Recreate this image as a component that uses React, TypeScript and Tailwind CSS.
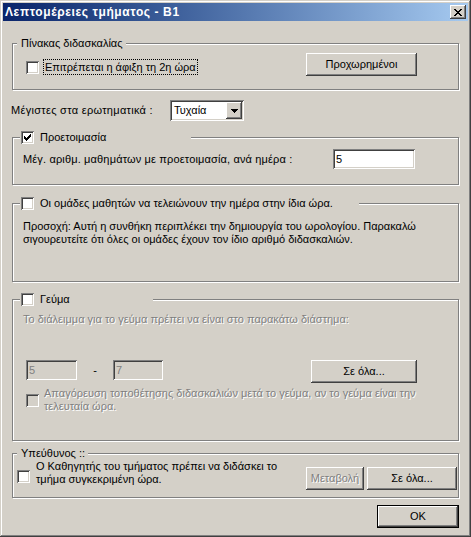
import type { ReactNode } from 'react';

const raised =
  'bg-[#d4d0c8] shadow-[inset_-1px_-1px_0_#404040,inset_1px_1px_0_#fff,inset_-2px_-2px_0_#808080,inset_2px_2px_0_#d4d0c8]';
const sunken =
  'shadow-[inset_1px_1px_0_#808080,inset_-1px_-1px_0_#fff,inset_2px_2px_0_#404040,inset_-2px_-2px_0_#d4d0c8]';
const grayText = 'text-[#808080] [text-shadow:1px_1px_0_#fff]';

function Checkbox({ checked = false, disabled = false }: { checked?: boolean; disabled?: boolean }) {
  return (
    <div className={`w-[13px] h-[13px] shrink-0 ${sunken} ${disabled ? 'bg-[#d4d0c8]' : 'bg-white'}`}>
      {checked && (
        <svg width="13" height="13" shapeRendering="crispEdges">
          <rect x="3" y="5" width="1" height="3" fill="#000" />
          <rect x="4" y="6" width="1" height="3" fill="#000" />
          <rect x="5" y="7" width="1" height="3" fill="#000" />
          <rect x="6" y="6" width="1" height="3" fill="#000" />
          <rect x="7" y="5" width="1" height="3" fill="#000" />
          <rect x="8" y="4" width="1" height="3" fill="#000" />
          <rect x="9" y="3" width="1" height="3" fill="#000" />
        </svg>
      )}
    </div>
  );
}

function Btn({ className, children, disabled = false }: { className: string; children: ReactNode; disabled?: boolean }) {
  return (
    <div className={`flex items-center justify-center shrink-0 ${raised} ${className} ${disabled ? grayText : ''}`}>
      {children}
    </div>
  );
}

function Edit({ className, value, disabled = false }: { className: string; value: string; disabled?: boolean }) {
  return (
    <div
      className={`flex items-center pl-[3px] shrink-0 ${sunken} ${className} ${
        disabled ? 'bg-[#d4d0c8] text-[#808080]' : 'bg-white'
      }`}
    >
      {value}
    </div>
  );
}

function Group({ className, legend, children }: { className: string; legend: ReactNode; children: ReactNode }) {
  return (
    <div className={`relative border border-[#808080] shadow-[inset_1px_1px_0_#fff,1px_1px_0_#fff] ${className}`}>
      {legend}
      {children}
    </div>
  );
}

function TextLegend({ text }: { text: string }) {
  return (
    <div className="absolute left-[4px] top-[-7px] h-[13px] flex items-center bg-[#d4d0c8] pl-[4px] pr-[3px] whitespace-nowrap">
      {text}
    </div>
  );
}

function CheckLegend({ text, width, checked = false }: { text: string; width: string; checked?: boolean }) {
  return (
    <div className={`absolute left-[7px] top-[-7px] h-[13px] flex items-center bg-[#d4d0c8] pl-[1px] whitespace-nowrap ${width}`}>
      <Checkbox checked={checked} />
      <span className="ml-[6px]">{text}</span>
    </div>
  );
}

export default function App() {
  return (
    <div className="w-[471px] h-[537px] bg-[#d4d0c8] p-[3px] flex flex-col text-[11px] leading-[13px] text-black font-['Liberation_Sans',Arial,sans-serif] shadow-[inset_-1px_-1px_0_#404040,inset_1px_1px_0_#d4d0c8,inset_-2px_-2px_0_#808080,inset_2px_2px_0_#fff]">
      {/* Title bar */}
      <div className="h-[18px] flex items-center justify-between bg-gradient-to-r from-[#0a246a] to-[#a6caf0] pl-[2px] pr-[2px]">
        <span className="font-bold text-white text-[12px] tracking-[0.6px] whitespace-nowrap">Λεπτομέρειες τμήματος - B1</span>
        <Btn className="w-[16px] h-[14px]">
          <svg width="8" height="7" shapeRendering="crispEdges">
            <path
              fill="#000"
              d="M0 0h2v1H0zM6 0h2v1H6zM1 1h2v1H1zM5 1h2v1H5zM2 2h4v1H2zM3 3h2v1H3zM2 4h4v1H2zM1 5h2v1H1zM5 5h2v1H5zM0 6h2v1H0zM6 6h2v1H6z"
            />
          </svg>
        </Btn>
      </div>

      <div className="flex flex-col ml-[9px] w-[447px]">
        {/* Πίνακας διδασκαλίας */}
        <Group className="mt-[22px] h-[47px]" legend={<TextLegend text="Πίνακας διδασκαλίας" />}>
          <div className="flex items-start justify-between pt-[9px] pl-[13px] pr-[41px]">
            <div className="mt-[6px] h-[16px] flex items-center">
              <Checkbox />
              <span className="ml-[4px] h-[16px] px-[1px] flex items-center border border-dotted border-black whitespace-nowrap">
                Επιτρέπεται η άφιξη τη 2η ώρα
              </span>
            </div>
            <Btn className="w-[111px] h-[23px]">Προχωρημένοι</Btn>
          </div>
        </Group>

        {/* Μέγιστες */}
        <div className="mt-[10px] ml-[-1px] flex items-center">
          <span className="w-[159px] whitespace-nowrap tracking-[0.3px]">Μέγιστες στα ερωτηματικά :</span>
          <div className={`w-[74px] h-[21px] bg-white flex items-center ${sunken}`}>
            <span className="flex-1 pl-[4px]">Τυχαία</span>
            <Btn className="w-[16px] h-[17px] mr-[2px]">
              <svg width="7" height="4" shapeRendering="crispEdges">
                <path fill="#000" d="M0 0h7v1H0zM1 1h5v1H1zM2 2h3v1H2zM3 3h1v1H3z" />
              </svg>
            </Btn>
          </div>
        </div>

        {/* Προετοιμασία */}
        <Group className="mt-[16px] h-[48px]" legend={<CheckLegend text="Προετοιμασία" width="w-[171px]" checked />}>
          <div className="flex items-center pt-[11px] pl-[10px]">
            <span className="w-[310px] whitespace-nowrap tracking-[0.15px]">
              Μέγ. αριθμ. μαθημάτων με προετοιμασία, ανά ημέρα :
            </span>
            <Edit className="w-[82px] h-[20px]" value="5" />
          </div>
        </Group>

        {/* Ομάδες */}
        <Group
          className="mt-[18px] h-[79px]"
          legend={<CheckLegend text="Οι ομάδες μαθητών να τελειώνουν την ημέρα στην ίδια ώρα." width="w-[339px]" />}
        >
          <p className="pt-[16px] pl-[10px] whitespace-nowrap">
            Προσοχή: Αυτή η συνθήκη περιπλέκει την δημιουργία του ωρολογίου. Παρακαλώ
            <br />
            σιγουρευτείτε ότι όλες οι ομάδες έχουν τον ίδιο αριθμό διδασκαλιών.
          </p>
        </Group>

        {/* Γεύμα */}
        <Group className="mt-[17px] h-[142px]" legend={<CheckLegend text="Γεύμα" width="w-[133px]" />}>
          <div className="flex flex-col pt-[13px] pl-[13px] pr-[41px]">
            <span className={`ml-[-3px] whitespace-nowrap ${grayText}`}>
              Το διάλειμμα για το γεύμα πρέπει να είναι στο παρακάτω διάστημα:
            </span>
            <div className="mt-[34px] flex items-start">
              <Edit className="w-[51px] h-[20px]" value="5" disabled />
              <span className="w-[36px] h-[20px] flex items-center justify-center">-</span>
              <Edit className="w-[50px] h-[20px]" value="7" disabled />
              <Btn className="ml-auto w-[106px] h-[23px]">Σε όλα...</Btn>
            </div>
            <div className="mt-[4px] flex items-center">
              <Checkbox disabled />
              <p className={`ml-[5px] whitespace-nowrap ${grayText}`}>
                Απαγόρευση τοποθέτησης διδασκαλιών μετά το γεύμα, αν το γεύμα είναι την
                <br />
                τελευταία ώρα.
              </p>
            </div>
          </div>
        </Group>

        {/* Υπεύθυνος */}
        <Group className="mt-[12px] h-[45px]" legend={<TextLegend text="Υπεύθυνος ::" />}>
          <div className="flex items-start pt-[6px] pl-[4px] pr-[1px]">
            <div className="mt-[10px]">
              <Checkbox />
            </div>
            <p className="ml-[6px] whitespace-nowrap">
              Ο Καθηγητής του τμήματος πρέπει να διδάσκει το
              <br />
              τμήμα συγκεκριμένη ώρα.
            </p>
            <div className="ml-auto mt-[7px] flex gap-[3px]">
              <Btn className="w-[58px] h-[23px]" disabled>
                Μεταβολή
              </Btn>
              <Btn className="w-[90px] h-[23px]">Σε όλα...</Btn>
            </div>
          </div>
        </Group>

        {/* OK */}
        <div className="mt-[7px] self-end w-[82px] h-[23px] border border-black">
          <Btn className="w-full h-full">OK</Btn>
        </div>
      </div>
    </div>
  );
}
